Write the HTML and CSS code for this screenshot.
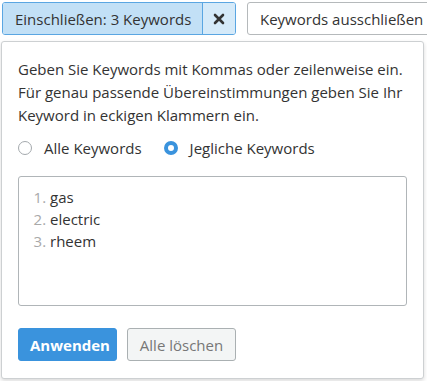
FILE: index.html
```html
<!DOCTYPE html>
<html lang="de">
<head>
    <meta charset="UTF-8">
    <title>Keywords</title>
    <link rel="stylesheet" href="styles.css">
</head>
<body>
    <div class="toolbar">
        <div class="include-group">
            <button class="include-label">Einschließen: 3 Keywords</button>
            <button class="include-clear" aria-label="Entfernen">
                <svg width="12" height="12" viewBox="0 0 12 12"><path d="M2 2 L10 10 M10 2 L2 10" stroke="#333" stroke-width="2.6" stroke-linecap="round"/></svg>
            </button>
        </div>
        <button class="exclude-button">Keywords ausschließen</button>
    </div>

    <div class="popup">
        <p class="hint">Geben Sie Keywords mit Kommas oder zeilenweise ein.<br>Für genau passende Übereinstimmungen geben Sie Ihr<br>Keyword in eckigen Klammern ein.</p>

        <div class="match-options">
            <label class="radio"><span class="radio-dot"></span>Alle Keywords</label>
            <label class="radio checked"><span class="radio-dot"></span>Jegliche Keywords</label>
        </div>

        <div class="keyword-box">
            <ol class="keyword-list">
                <li>gas</li>
                <li>electric</li>
                <li>rheem</li>
            </ol>
        </div>

        <div class="actions">
            <button class="btn btn-primary">Anwenden</button>
            <button class="btn btn-secondary">Alle löschen</button>
        </div>
    </div>
</body>
</html>
```

FILE: styles.css
```css
body {
    margin: 0;
    padding: 2px 1px;
    background: #fff;
    font-family: "Open Sans", "Noto Sans", sans-serif;
    font-size: 15px;
    color: #333;
    overflow: hidden;
}
button {
    font-family: inherit;
    font-size: inherit;
    cursor: pointer;
}
.toolbar {
    display: flex;
    gap: 11px;
    height: 33px;
    padding-left: 1px;
    white-space: nowrap;
}
.include-group {
    flex: none;
    display: flex;
    height: 33px;
    border: 1px solid #5aa6e2;
    border-radius: 3px;
    box-sizing: border-box;
    overflow: hidden;
}
.include-label {
    width: 200px;
    padding: 0 0 0 12px;
    text-align: left;
    border: none;
    border-right: 1px solid #5aa6e2;
    background: #c2e0f6;
    color: #333;
}
.include-clear {
    width: 32px;
    border: none;
    background: #d5eaf9;
    display: flex;
    align-items: center;
    justify-content: center;
    padding: 0;
}
.exclude-button {
    flex: none;
    height: 33px;
    padding: 0 12px;
    width: 200px;
    text-align: left;
    background: #fff;
    border: 1px solid #b5b9bb;
    border-radius: 3px;
    color: #333;
}
.popup {
    margin-top: 6px;
    width: 423px;
    height: 338px;
    box-sizing: border-box;
    padding: 16px 16px 0 16px;
    border: 1px solid #cdd0d2;
    border-radius: 3px;
    box-shadow: 0 2px 4px rgba(0, 0, 0, 0.15);
    background: #fff;
}
.hint {
    margin: 0;
    line-height: 23px;
    white-space: nowrap;
}
.match-options {
    display: flex;
    gap: 22px;
    margin-top: 9px;
    height: 24px;
    align-items: center;
}
.radio {
    display: flex;
    align-items: center;
    gap: 12px;
}
.radio-dot {
    width: 12px;
    height: 12px;
    border: 1px solid #a4a9ad;
    border-radius: 50%;
    box-sizing: content-box;
}
.radio.checked .radio-dot {
    width: 6px;
    height: 6px;
    border: 4px solid #3a93dd;
}
.keyword-box {
    margin-top: 16px;
    height: 130px;
    box-sizing: border-box;
    border: 1px solid #b0b5b8;
    border-radius: 3px;
    padding: 9px 0 0 13px;
}
.keyword-list {
    margin: 0;
    padding-left: 18px;
    line-height: 22px;
}
.keyword-list li::marker {
    color: #a9a9a9;
}
.actions {
    display: flex;
    gap: 10px;
    margin-top: 22px;
}
.btn {
    height: 33px;
    border-radius: 3px;
    padding: 0 11px;
}
.btn-primary {
    width: 99px;
    background: #3a93dd;
    border: 1px solid #3a93dd;
    color: #fff;
    font-weight: bold;
}
.btn-secondary {
    width: 109px;
    background: #f3f5f5;
    border: 1px solid #aab0b2;
    color: #777;
}
```
